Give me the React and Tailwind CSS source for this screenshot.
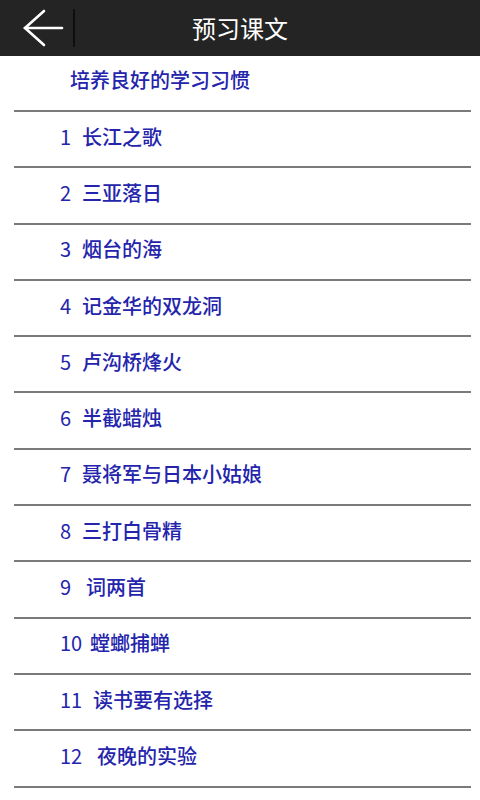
const lessons = [
  { num: '1', title: '长江之歌', x: 82 },
  { num: '2', title: '三亚落日', x: 82 },
  { num: '3', title: '烟台的海', x: 82 },
  { num: '4', title: '记金华的双龙洞', x: 82 },
  { num: '5', title: '卢沟桥烽火', x: 82 },
  { num: '6', title: '半截蜡烛', x: 82 },
  { num: '7', title: '聂将军与日本小姑娘', x: 82 },
  { num: '8', title: '三打白骨精', x: 82 },
  { num: '9', title: '词两首', x: 86 },
  { num: '10', title: '螳螂捕蝉', x: 90 },
  { num: '11', title: '读书要有选择', x: 93 },
  { num: '12', title: '夜晚的实验', x: 97 },
]

const font = { fontFamily: '"Noto Sans CJK SC", "Noto Sans", sans-serif' }

function Row({ children }) {
  return (
    <div className="ml-[14px] mr-[9px] h-[56.3px] border-b-2 border-[#7a7a7a] flex items-center pb-[5px] text-[20px] font-medium text-[#2424ac]">
      {children}
    </div>
  )
}

export default function App() {
  return (
    <div className="w-[480px] h-[800px] bg-white overflow-hidden" style={font}>
      <header className="h-[56px] bg-[#242424] flex items-center relative">
        <div className="w-[73px] flex justify-center">
          <svg width="42" height="38" viewBox="0 0 42 38" fill="none" stroke="white" strokeWidth="2.6" strokeLinecap="round" className="ml-[12px]">
            <path d="M3 19H40" />
            <path d="M22 2L3 19L22 36" />
          </svg>
        </div>
        <div className="w-[2px] h-[38px] bg-[#0e0e0e]" />
        <div className="absolute inset-0 flex items-center justify-center pointer-events-none">
          <span className="text-[24px] text-white">预习课文</span>
        </div>
      </header>
      <div className="ml-[14px] mr-[9px] h-[56px] border-b-2 border-[#7a7a7a] flex items-center pb-[6px] text-[20px] font-medium text-[#2424ac]">
        <span className="ml-[56px]">培养良好的学习习惯</span>
      </div>
      {lessons.map((l) => (
        <Row key={l.num}>
          <span className="ml-[46px] inline-block font-normal" style={{ width: l.x - 60 }}>{l.num}</span>
          <span>{l.title}</span>
        </Row>
      ))}
    </div>
  )
}
